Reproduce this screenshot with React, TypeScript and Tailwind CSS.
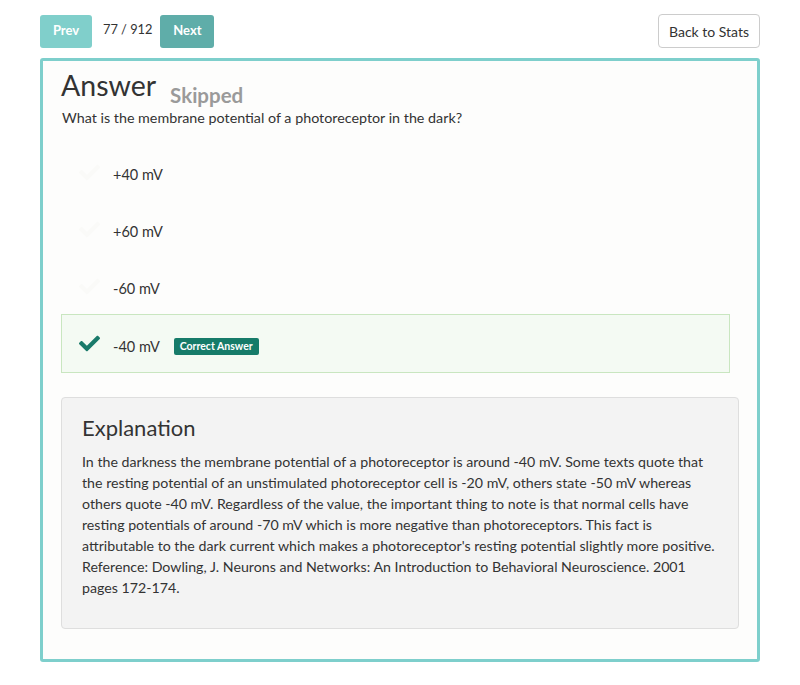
import React from "react";

function Check({ className }: { className?: string }) {
  return (
    <svg viewBox="0 0 512 512" className={className} fill="currentColor">
      <path d="M173.898 439.404l-166.4-166.4c-9.997-9.997-9.997-26.206 0-36.204l36.203-36.204c9.997-9.998 26.207-9.998 36.204 0L192 312.69 432.095 72.596c9.997-9.997 26.207-9.997 36.204 0l36.203 36.204c9.997 9.997 9.997 26.206 0 36.204l-294.4 294.401c-9.998 9.997-26.207 9.997-36.204-.001z" />
    </svg>
  );
}

const options = ["+40 mV", "+60 mV", "-60 mV"];

const lines = [
  "In the darkness the membrane potential of a photoreceptor is around -40 mV. Some texts quote that",
  "the resting potential of an unstimulated photoreceptor cell is -20 mV, others state -50 mV whereas",
  "others quote -40 mV. Regardless of the value, the important thing to note is that normal cells have",
  "resting potentials of around -70 mV which is more negative than photoreceptors. This fact is",
  "attributable to the dark current which makes a photoreceptor's resting potential slightly more positive.",
  "Reference: Dowling, J. Neurons and Networks: An Introduction to Behavioral Neuroscience. 2001",
  "pages 172-174.",
];

export default function App() {
  return (
    <div
      className="min-h-[685px] bg-white text-[#333] px-[40px] pt-[14px]"
      style={{ fontFamily: "Lato, 'Open Sans', sans-serif" }}
    >
      <div className="flex items-center justify-between h-[34px]">
        <div className="flex items-center">
          <button className="h-[33px] w-[52px] rounded-[3px] bg-[#80cfcb] text-white text-[13px] font-bold">
            Prev
          </button>
          <span className="ml-[11px] mr-[8px] text-[12.8px] text-[#333] -mt-[3px]">77 / 912</span>
          <button className="h-[33px] w-[54px] rounded-[3px] bg-[#5fada9] text-white text-[13px] font-bold">
            Next
          </button>
        </div>
        <button className="h-[34px] w-[102px] rounded-[4px] border border-[#ccc] bg-white text-[14px] text-[#333]">
          Back to Stats
        </button>
      </div>

      <div className="mt-[10px] border-[3px] border-[#7ecfcc] rounded-[3px] bg-[#fdfdfc] pl-[18px] pr-[18px] pt-[6px] pb-[30px]">
        <div className="flex items-end">
          <h1 className="text-[28.5px] leading-[36px] text-[#333]">Answer</h1>
          <span className="ml-[14px] text-[20.5px] font-bold text-[#9a9a9a] leading-[26px] -mb-[5px]">Skipped</span>
        </div>
        <p className="text-[14.3px] leading-[20px] mt-[5px] ml-[1px]">
          What is the membrane potential of a photoreceptor in the dark?
        </p>

        <div className="mt-[16px] mr-[9px]">
          {options.map((o) => (
            <div key={o} className="h-[57px] flex items-center border border-transparent">
              <Check className="w-[21px] h-[21px] ml-[17px] text-[#fafaf8]" />
              <span className="ml-[13px] text-[14.5px] mt-[5px]">{o}</span>
            </div>
          ))}
          <div className="h-[59px] flex items-center border border-[#c9e6c0] bg-[#f4faf3] mt-[-1px]">
            <Check className="w-[21px] h-[21px] ml-[17px] text-[#1a7a6a]" />
            <span className="ml-[13px] text-[14.5px] mt-[7px]">-40 mV</span>
            <span className="ml-[14px] mt-[5px] bg-[#167b69] text-white text-[10.5px] font-bold rounded-[2px] px-[6px] leading-[17px]">
              Correct Answer
            </span>
          </div>
        </div>

        <div className="mt-[24px] bg-[#f3f3f3] border border-[#dedede] rounded-[4px] px-[20px] pt-[15px] pb-[30px]">
          <h2 className="text-[22px] leading-[30px] text-[#333]">Explanation</h2>
          <p className="mt-[8px] text-[14.2px] leading-[21px] text-[#333] whitespace-nowrap">
            {lines.map((l, i) => (
              <React.Fragment key={i}>
                {l}
                {i < lines.length - 1 && <br />}
              </React.Fragment>
            ))}
          </p>
        </div>
      </div>
    </div>
  );
}
